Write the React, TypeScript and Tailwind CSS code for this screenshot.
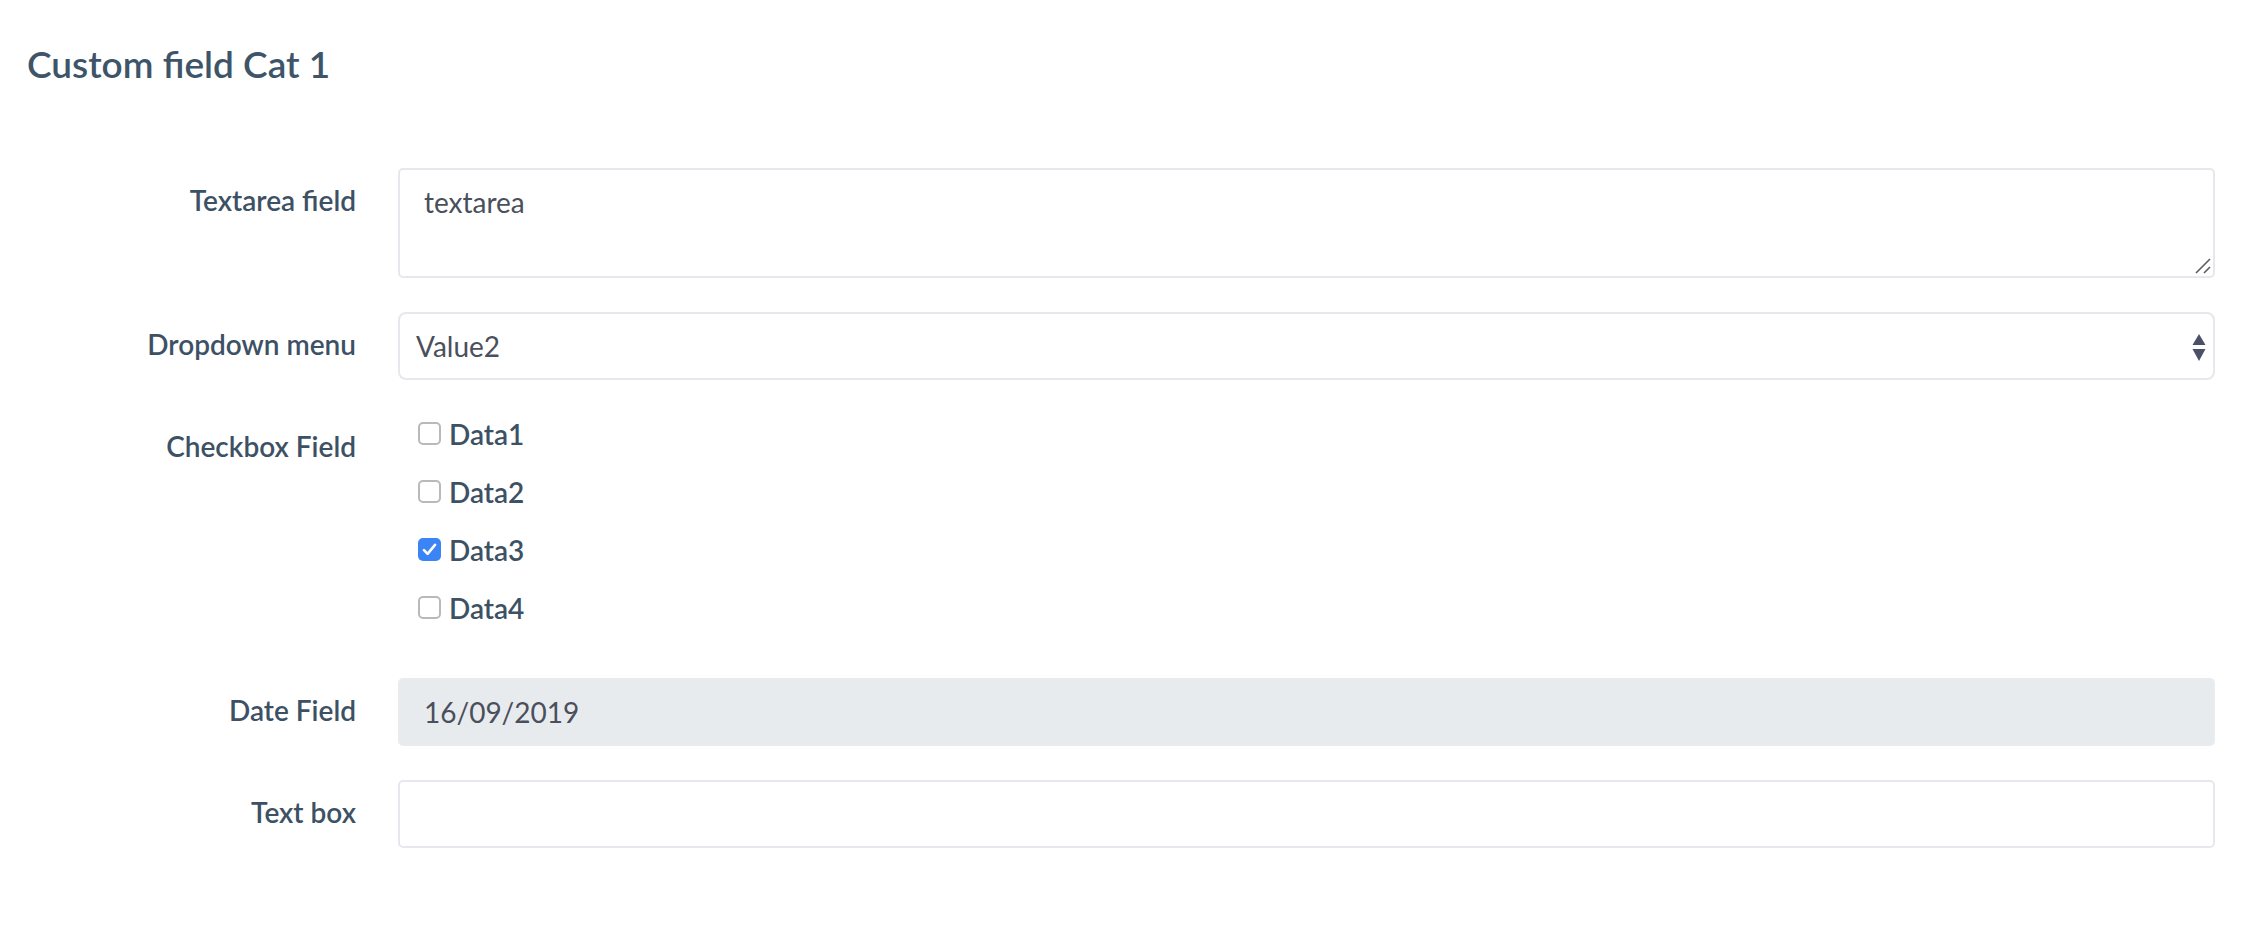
import React from 'react';

const labelCls =
  "w-[356px] shrink-0 text-right text-[28px] leading-[42px] pt-[11px] font-semibold text-[#3d5165]";

const Checkbox: React.FC<{ checked?: boolean }> = ({ checked }) =>
  checked ? (
    <span className="w-[23px] h-[23px] rounded-[5px] bg-[#3b84f6] flex items-center justify-center">
      <svg width="15" height="13" viewBox="0 0 15 13" fill="none">
        <path d="M2 7.2 L5.6 10.8 L13 1.8" stroke="#fff" strokeWidth="2.6" strokeLinecap="round" strokeLinejoin="round" />
      </svg>
    </span>
  ) : (
    <span className="w-[23px] h-[23px] rounded-[5px] border-2 border-[#b9b9b9] bg-white" />
  );

const boxes = [
  { name: 'Data1', checked: false },
  { name: 'Data2', checked: false },
  { name: 'Data3', checked: true },
  { name: 'Data4', checked: false },
];

export default function App() {
  return (
    <div className="min-h-screen bg-white pr-[37px] pt-[42px] font-['Lato',sans-serif]">
      <h1 className="pl-[27px] text-[37px] leading-[44px] font-semibold text-[#3e5468]">Custom field Cat 1</h1>

      <form className="mt-[82px] flex flex-col">
        {/* textarea */}
        <div className="flex">
          <label className={labelCls}>Textarea field</label>
          <div className="relative ml-[42px] flex-1 h-[110px] border-2 border-[#e5e8ec] rounded-[5px] pl-[24px] pt-[11px] text-[28px] leading-[42px] text-[#4a4f5c]">
            textarea
            <svg className="absolute right-[1px] bottom-[1px]" width="18" height="18" viewBox="0 0 18 18">
              <path d="M2 16 L16 2" stroke="#5b5b5b" strokeWidth="1.6" />
              <path d="M10 16 L16 10" stroke="#5b5b5b" strokeWidth="1.6" />
            </svg>
          </div>
        </div>

        {/* select */}
        <div className="flex mt-[34px]">
          <label className={labelCls}>Dropdown menu</label>
          <div className="relative ml-[42px] flex-1 h-[68px] border-2 border-[#e5e8ec] rounded-[8px] pl-[16px] pt-[11px] text-[28px] leading-[42px] text-[#4a4f5c]">
            Value2
            <svg className="absolute right-[7px] top-[20px]" width="14" height="28" viewBox="0 0 14 28">
              <path d="M7 0 L13.5 11 L0.5 11 Z" fill="#4b5068" />
              <path d="M0.5 15 L13.5 15 L7 27 Z" fill="#4b5068" />
            </svg>
          </div>
        </div>

        {/* checkboxes */}
        <div className="flex mt-[33px]">
          <label className={`${labelCls} mt-[1px]`}>Checkbox Field</label>
          <div className="ml-[62px] flex flex-col gap-[17px]">
            {boxes.map((b) => (
              <div key={b.name} className="h-[41px] flex items-center gap-[8px]">
                <Checkbox checked={b.checked} />
                <span className="text-[28px] leading-none font-semibold text-[#3d5165]">{b.name}</span>
              </div>
            ))}
          </div>
        </div>

        {/* date */}
        <div className="flex mt-[50px]">
          <label className={labelCls}>Date Field</label>
          <div className="ml-[42px] flex-1 h-[68px] border-2 border-[#e9ecef] bg-[#e8ebee] rounded-[5px] pl-[24px] pt-[11px] text-[28px] leading-[42px] text-[#4a4f5c]">
            16/09/2019
          </div>
        </div>

        {/* text box */}
        <div className="flex mt-[34px]">
          <label className={labelCls}>Text box</label>
          <div className="ml-[42px] flex-1 h-[68px] border-2 border-[#e5e8ec] rounded-[5px]" />
        </div>
      </form>
    </div>
  );
}
